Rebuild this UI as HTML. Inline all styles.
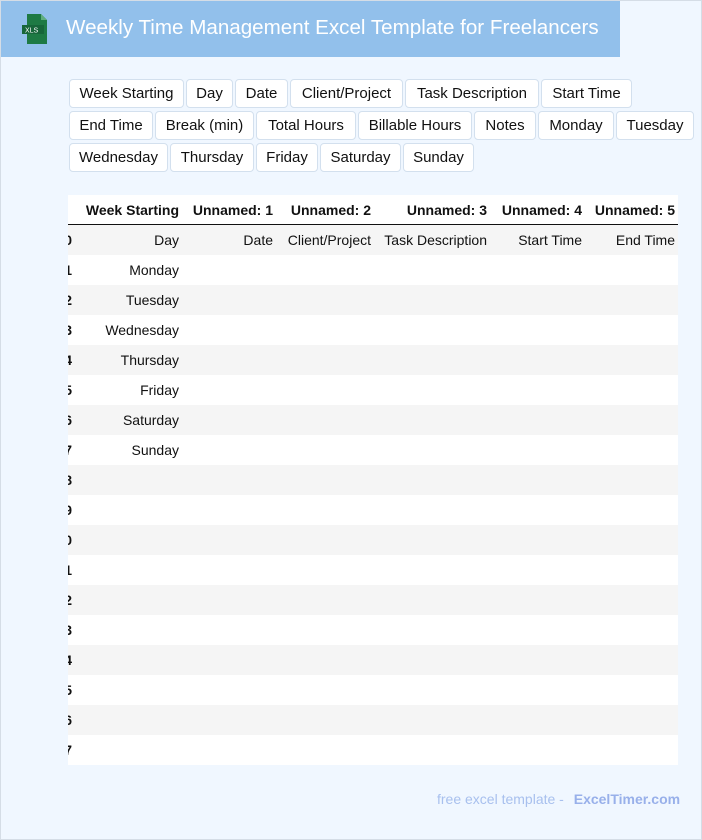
<!DOCTYPE html>
<html><head><meta charset="utf-8"><style>
*{margin:0;padding:0;box-sizing:border-box}
body{width:702px;height:840px;background:#f0f7ff;font-family:"Liberation Sans",sans-serif;position:relative;overflow:hidden}
.bd{position:absolute;left:0;top:0;width:702px;height:840px;border:1px solid #d5dde6;pointer-events:none}
.hdr{position:absolute;left:0;top:0;width:620px;height:57px;background:#92c0eb}
.hdr h1{position:absolute;left:66px;top:16px;font-size:20.6px;font-weight:normal;color:#fff;white-space:nowrap}
.btn{position:absolute;height:29px;background:#fff;border:1px solid #d3e0ee;border-radius:4px;font-size:15px;color:#111;text-align:center;line-height:27px;white-space:nowrap}
.tbl{position:absolute;left:68px;top:195px;width:610px;height:570px;overflow:hidden;background:#fff}
.row{position:absolute;left:0;width:610px;height:30px;font-size:14px;color:#111}
.row span{position:absolute;top:7px;white-space:nowrap;text-align:right}
.g{background:#f5f5f5}
.h span{font-weight:bold;top:7px}
.foot{position:absolute;left:437px;top:791px;font-size:14px;color:#a8c0ee}
.foot b{color:#98b0ea;margin-left:6px}
</style></head><body>
<div class="hdr">
<svg style="position:absolute;left:22px;top:14px" width="28" height="30" viewBox="0 0 28 30"><path d="M5 0h14l6 6v24H5z" fill="#1e7a44"/><path d="M19 0v6h6z" fill="#5fae7e"/><rect x="0" y="11" width="22" height="9" fill="#17663a"/><text x="3" y="18.5" font-size="7" fill="#fff" font-family="Liberation Sans">XLS</text></svg>
<h1>Weekly Time Management Excel Template for Freelancers</h1></div>
<div class="btn" style="left:69px;top:79px;width:115px">Week Starting</div>
<div class="btn" style="left:186px;top:79px;width:47px">Day</div>
<div class="btn" style="left:235px;top:79px;width:53px">Date</div>
<div class="btn" style="left:290px;top:79px;width:113px">Client/Project</div>
<div class="btn" style="left:405px;top:79px;width:134px">Task Description</div>
<div class="btn" style="left:541px;top:79px;width:91px">Start Time</div>
<div class="btn" style="left:69px;top:111px;width:84px">End Time</div>
<div class="btn" style="left:155px;top:111px;width:99px">Break (min)</div>
<div class="btn" style="left:256px;top:111px;width:100px">Total Hours</div>
<div class="btn" style="left:358px;top:111px;width:114px">Billable Hours</div>
<div class="btn" style="left:474px;top:111px;width:62px">Notes</div>
<div class="btn" style="left:538px;top:111px;width:76px">Monday</div>
<div class="btn" style="left:616px;top:111px;width:78px">Tuesday</div>
<div class="btn" style="left:69px;top:143px;width:99px">Wednesday</div>
<div class="btn" style="left:170px;top:143px;width:84px">Thursday</div>
<div class="btn" style="left:256px;top:143px;width:62px">Friday</div>
<div class="btn" style="left:320px;top:143px;width:81px">Saturday</div>
<div class="btn" style="left:403px;top:143px;width:71px">Sunday</div>
<div class="tbl" id="t">
<div class="row h" style="top:0;border-bottom:1px solid #111"><span style="right:499px">Week Starting</span><span style="right:405px">Unnamed: 1</span><span style="right:307px">Unnamed: 2</span><span style="right:191px">Unnamed: 3</span><span style="right:96px">Unnamed: 4</span><span style="right:3px">Unnamed: 5</span></div>
</div>
<div class="foot">free excel template - <b>ExcelTimer.com</b></div>
<div class="bd"></div>
<script>
var t=document.getElementById('t');var d=['Day','Monday','Tuesday','Wednesday','Thursday','Friday','Saturday','Sunday'];
for(var i=0;i<18;i++){var r=document.createElement('div');r.className='row'+(i%2==0?' g':'');r.style.top=(30+i*30)+'px';
var h='<span style="right:606px;font-weight:bold">'+(i%10)+'</span>';
if(i<8)h+='<span style="right:499px">'+d[i]+'</span>';
if(i==0)h+='<span style="right:405px">Date</span><span style="right:307px">Client/Project</span><span style="right:191px">Task Description</span><span style="right:96px">Start Time</span><span style="right:3px">End Time</span>';
r.innerHTML=h;t.appendChild(r);}
</script>
</body></html>
